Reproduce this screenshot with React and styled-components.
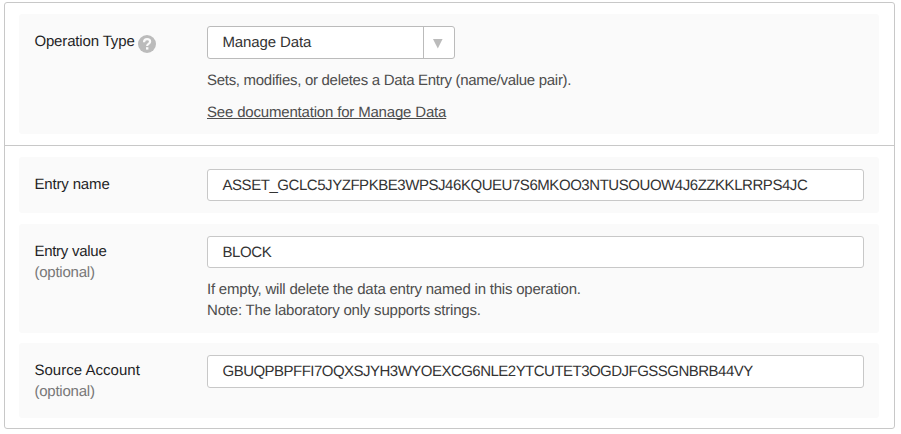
import React from "react";
import styled, { createGlobalStyle } from "styled-components";

const GlobalStyle = createGlobalStyle`
  * { box-sizing: border-box; }
  body {
    margin: 0;
    background: #fff;
    color: #333;
    font: 15px/21px "Liberation Sans", Arial, sans-serif;
    text-rendering: geometricPrecision;
  }
`;

const Card = styled.div`
  width: 891px;
  height: 427px;
  margin: 2px 0 0 4px;
  border: 1px solid #c8c8c8;
  border-radius: 3px;
`;

const Section = styled.section`
  display: flex;
  flex-direction: column;
  padding: 11px 15px 11px 14px;

  & + & {
    border-top: 1px solid #c8c8c8;
  }
`;

const Row = styled.div`
  display: flex;
  height: ${(p) => p.$height}px;
  margin-bottom: ${(p) => p.$gap || 0}px;
  padding: 12px 15px 0;
  background: #fafafa;
  border-radius: 3px;
`;

const Label = styled.div`
  width: 173px;
  flex: none;
  padding: 5px 0 0 0.4px;
  color: #1f1f26;
  white-space: nowrap;
`;

const LabelLine = styled.div`
  display: flex;
  height: 21px;
`;

const Text = styled.span`
  letter-spacing: ${(p) => p.$spacing || 0}px;
  white-space: nowrap;
`;

const Optional = styled.div`
  color: #777;
`;

const Help = styled.svg`
  flex: none;
  width: 18px;
  height: 18px;
  margin: 4px 0 0 3.6px;
`;

const Content = styled.div`
  flex: 1;
  min-width: 0;
`;

const Field = styled.div`
  height: ${(p) => p.$height || 32}px;
  padding: 5px 14.5px 0;
  background: #fff;
  border: 1px solid #c8c8c8;
  border-radius: 3px;
  color: #333;
`;

const Select = styled.div`
  display: flex;
  width: 248px;
  height: 33px;
  background: #fff;
  border: 1px solid #bbb;
  border-radius: 3px;
`;

const SelectValue = styled.div`
  flex: 1;
  padding: 5px 0 0 14.5px;
`;

const SelectArrow = styled.div`
  width: 31px;
  border-left: 1px solid #bbb;
  padding: 12px 0 0 9px;
  line-height: 0;
`;

const Note = styled.div`
  margin-top: 11px;
  color: #4d4d4d;
`;

const DocLink = styled.a`
  color: #4d4d4d;
  text-decoration: underline;
  text-decoration-thickness: 1px;
  text-underline-offset: 1px;
  text-decoration-skip-ink: none;
`;

export default function App() {
  return (
    <>
      <GlobalStyle />
      <Card>
        <Section>
          <Row $height={120}>
            <Label>
              <LabelLine>
                <Text $spacing={-0.15}>Operation Type</Text>
                <Help viewBox="0 0 18 18">
                  <circle cx="9" cy="9" r="9" fill="#bbb" />
                  <path d="M6 7.2C6.1 5.2 7.3 4.2 9.1 4.2s3 1 3 2.5c0 2.2-3 2.1-3 4.2" fill="none" stroke="#fafafa" strokeWidth="2.2" />
                  <rect x="8" y="12.2" width="2.4" height="2.4" fill="#fafafa" />
                </Help>
              </LabelLine>
            </Label>
            <Content>
              <Select>
                <SelectValue><Text $spacing={-0.13}>Manage Data</Text></SelectValue>
                <SelectArrow>
                  <svg width="10" height="10" viewBox="0 0 10 10"><path d="M0 0h9.6L4.8 9.6z" fill="#bbb" /></svg>
                </SelectArrow>
              </Select>
              <Note><Text $spacing={-0.29}>Sets, modifies, or deletes a Data Entry (name/value pair).</Text></Note>
              <Note><DocLink><Text $spacing={-0.18}>See documentation for Manage Data</Text></DocLink></Note>
            </Content>
          </Row>
        </Section>
        <Section>
          <Row $height={56} $gap={11}>
            <Label><Text $spacing={-0.15}>Entry name</Text></Label>
            <Content>
              <Field><Text $spacing={-0.45}>ASSET_GCLC5JYZFPKBE3WPSJ46KQUEU7S6MKOO3NTUSOUOW4J6ZZKKLRRPS4JC</Text></Field>
            </Content>
          </Row>
          <Row $height={109} $gap={10}>
            <Label>
              <Text $spacing={-0.27}>Entry value</Text>
              <Optional><Text $spacing={-0.22}>(optional)</Text></Optional>
            </Label>
            <Content>
              <Field><Text $spacing={-0.4}>BLOCK</Text></Field>
              <Note>
                <Text $spacing={-0.21}>If empty, will delete the data entry named in this operation.</Text><br />
                <Text $spacing={-0.2}>Note: The laboratory only supports strings.</Text>
              </Note>
            </Content>
          </Row>
          <Row $height={75}>
            <Label>
              <Text $spacing={0.03}>Source Account</Text>
              <Optional><Text $spacing={-0.22}>(optional)</Text></Optional>
            </Label>
            <Content>
              <Field $height={33}><Text $spacing={-0.52}>GBUQPBPFFI7OQXSJYH3WYOEXCG6NLE2YTCUTET3OGDJFGSSGNBRB44VY</Text></Field>
            </Content>
          </Row>
        </Section>
      </Card>
    </>
  );
}
